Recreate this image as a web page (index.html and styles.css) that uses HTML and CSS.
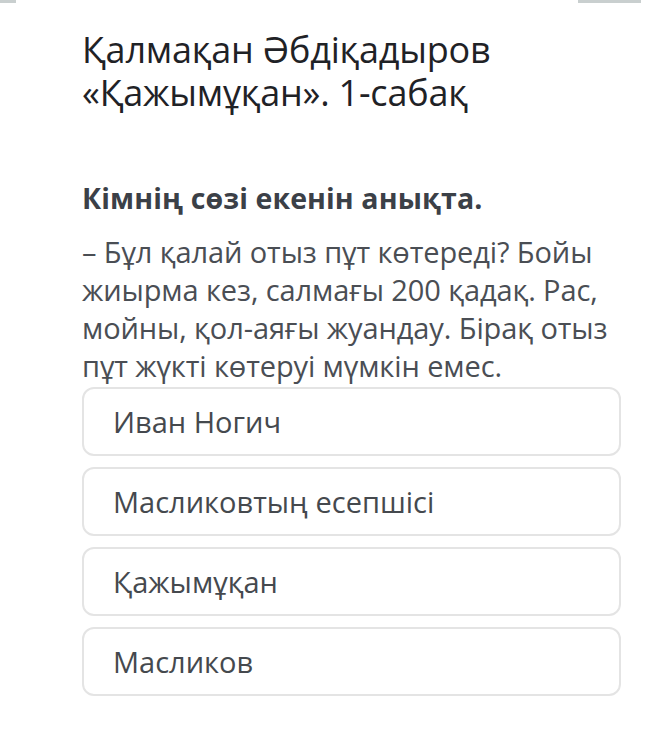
FILE: index.html
```html
<!DOCTYPE html>
<html lang="kk">
<head>
  <meta charset="UTF-8" />
  <meta name="viewport" content="width=device-width, initial-scale=1.0" />
  <title>Қалмақан Әбдіқадыров «Қажымұқан». 1-сабақ</title>
  <link rel="stylesheet" href="styles.css">
</head>
<body>

<div class="edge edge-left"></div>
<div class="edge edge-right"></div>

<main class="quiz">
  <h1>Қалмақан Әбдіқадыров «Қажымұқан». 1-сабақ</h1>

  <h2>Кімнің сөзі екенін анықта.</h2>
  <p class="quote">– Бұл қалай отыз пұт көтереді? Бойы жиырма кез, салмағы 200 қадақ. Рас, мойны, қол-аяғы жуандау. Бірақ отыз пұт жүкті көтеруі мүмкін емес.</p>

  <div class="options">
    <div class="option">Иван Ногич</div>
    <div class="option">Масликовтың есепшісі</div>
    <div class="option">Қажымұқан</div>
    <div class="option">Масликов</div>
  </div>
</main>

</body>
</html>
```

FILE: styles.css
```css
* {
  margin: 0;
  padding: 0;
  box-sizing: border-box;
}

html, body {
  background: #fff;
  font-family: 'Open Sans', 'Noto Sans', sans-serif;
  color: #45494e;
}

/* cut-off bits of the bar above */
.edge {
  position: absolute;
  top: 0;
  height: 3px;
  background: #c9cfcf;
}

.edge-left {
  left: 0;
  width: 16px;
}

.edge-right {
  left: 578px;
  width: 63px;
}

.quiz {
  padding: 28px 36px 0 82px;
}

h1 {
  font-size: 36px;
  font-weight: 400;
  line-height: 43px;
  letter-spacing: -0.2px;
  color: #1f2226;
  width: 470px;
}

h2 {
  margin-top: 66px;
  font-size: 28.5px;
  font-weight: 700;
  line-height: 36px;
  letter-spacing: 0.1px;
  color: #3b4047;
}

.quote {
  margin-top: 17px;
  font-size: 29px;
  line-height: 38px;
  letter-spacing: -0.1px;
  color: #4a4e54;
}

.options {
  display: flex;
  flex-direction: column;
  gap: 11px;
  margin-top: 2px;
  width: 539px;
}

.option {
  height: 69px;
  display: flex;
  align-items: center;
  padding-left: 29px;
  border: 2px solid #e4e4e4;
  border-radius: 12px;
  font-size: 29px;
  color: #45494e;
}
```
